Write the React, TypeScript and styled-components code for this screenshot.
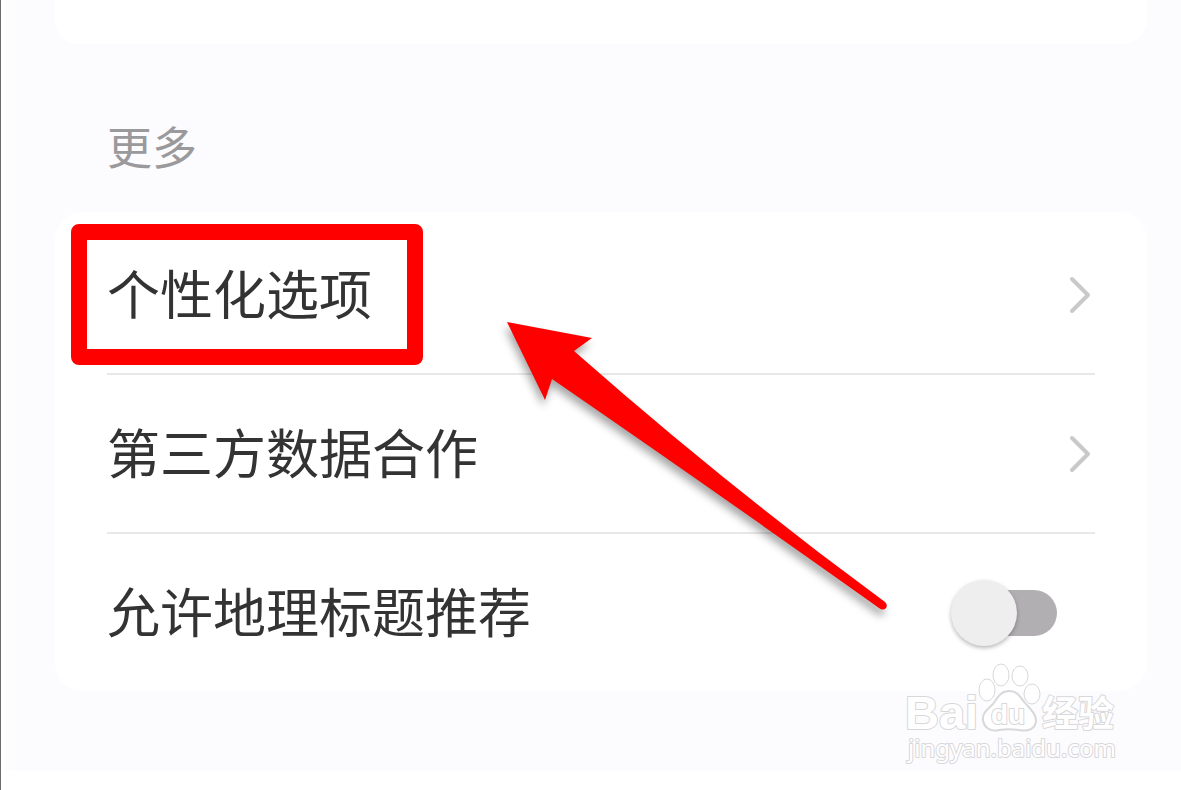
import React from 'react';
import styled, { createGlobalStyle } from 'styled-components';

const GlobalStyle = createGlobalStyle`
  * { box-sizing: border-box; }
  body {
    margin: 0;
    background: #ffffff;
    font-family: "Noto Sans CJK SC", "Noto Sans", sans-serif;
  }
`;

const Page = styled.div`
  min-height: 100vh;
  padding-left: 4px;
  border-left: 1px solid #6c6c6c;
  background: #ffffff;
`;

const Panel = styled.main`
  padding: 0 34px 80px 39px;
  border-left: 11px solid #fdfdfd;
  background: #fcfbfe;
`;

const PreviousCard = styled.div`
  height: 44px;
  border-radius: 0 0 24px 24px;
  background: #ffffff;
`;

const SectionTitle = styled.h2`
  margin: 0;
  padding: 69px 52px 33px;
  font-size: 45px;
  line-height: 66px;
  font-weight: 400;
  color: #9a999b;
`;

const Card = styled.section`
  position: relative;
  padding: 4px 52px 0;
  border-radius: 28px;
  background: #ffffff;
`;

const List = styled.ul`
  margin: 0;
  padding: 0;
  list-style: none;
`;

const Item = styled.li`
  position: relative;
  &:not(:last-child) {
    border-bottom: 2px solid #e8e8e8;
  }
`;

const LinkRow = styled.a`
  display: flex;
  align-items: center;
  justify-content: space-between;
  height: 157px;
  padding-right: 4px;
  color: #333333;
  text-decoration: none;
`;

const SwitchRow = styled.label`
  display: flex;
  align-items: center;
  justify-content: space-between;
  height: 157px;
  padding-right: 38px;
  color: #333333;
`;

const RowText = styled.span`
  padding-bottom: 6px;
  font-size: 53px;
  line-height: 76px;
`;

const Switch = styled.input`
  appearance: none;
  position: relative;
  width: 106px;
  height: 66px;
  margin: 0;
  &::before {
    content: "";
    position: absolute;
    inset: 10px 0 10px 12px;
    border-radius: 23px;
    background: #b2afb3;
  }
  &::after {
    content: "";
    position: absolute;
    top: 0;
    left: 0;
    width: 66px;
    height: 66px;
    border-radius: 50%;
    background: #eeeeee;
    box-shadow: 0 2px 4px rgba(0, 0, 0, 0.28);
  }
  &:checked::after {
    left: 40px;
  }
`;

const Highlight = styled.div`
  position: absolute;
  top: 8px;
  left: -36px;
  width: 352px;
  height: 141px;
  border: 16px solid #ff0000;
  border-radius: 8px;
  pointer-events: none;
`;

const Arrow = styled.svg`
  position: absolute;
  top: 98px;
  left: 441px;
  pointer-events: none;
  filter: drop-shadow(-2px 6px 4px rgba(0, 0, 0, 0.35));
`;

const Watermark = styled.svg`
  position: absolute;
  top: 446px;
  right: 17px;
  pointer-events: none;
  fill: #ffffff;
  stroke: #d8d7da;
  stroke-width: 2px;
  stroke-linejoin: round;
  text { paint-order: stroke; }
`;

const Chevron = () => (
  <svg width="24" height="40" viewBox="0 0 24 40" fill="none" stroke="#c9c9c9" strokeWidth="4" strokeLinecap="round" strokeLinejoin="round" aria-hidden="true">
    <path d="M5 4 L21 20 L5 36" />
  </svg>
);

export default function App() {
  return (
    <>
      <GlobalStyle />
      <Page>
        <Panel>
          <PreviousCard />
          <SectionTitle>更多</SectionTitle>
          <Card>
            <List>
              <Item>
                <LinkRow href="#personal">
                  <RowText>个性化选项</RowText>
                  <Chevron />
                </LinkRow>
                <Highlight />
              </Item>
              <Item>
                <LinkRow href="#data">
                  <RowText>第三方数据合作</RowText>
                  <Chevron />
                </LinkRow>
              </Item>
              <Item>
                <SwitchRow htmlFor="geo">
                  <RowText>允许地理标题推荐</RowText>
                  <Switch type="checkbox" role="switch" id="geo" />
                </SwitchRow>
              </Item>
            </List>
            <Arrow width="400" height="310" viewBox="496 310 400 310" aria-hidden="true">
              <path
                fill="#ff0000"
                d="M507 322 L592 338 L574 351 Q726 485 885 602 Q888 605 886 608 Q883 611 879 608 Q722 496 552 379 L545 400 Z"
              />
            </Arrow>
            <Watermark width="230" height="110" viewBox="900 658 230 110">
              <text x="905" y="729" fontFamily="Liberation Sans, sans-serif" fontWeight="700" fontSize="47">Bai</text>
              <ellipse cx="1001" cy="675" rx="8" ry="11" strokeWidth="1" />
              <ellipse cx="1020" cy="676" rx="8" ry="10" strokeWidth="1" />
              <ellipse cx="987" cy="690" rx="8" ry="11" strokeWidth="1" />
              <ellipse cx="1032" cy="694" rx="8" ry="10" strokeWidth="1" />
              <path d="M1009 691 C1000 691 997 699 993 704 C988 709 982 713 983 720 C984 728 991 732 999 730 C1006 729 1012 729 1019 730 C1028 732 1036 729 1036 720 C1036 713 1029 708 1025 703 C1020 697 1018 691 1009 691 Z" />
              <text x="991" y="724" fontFamily="Liberation Sans, sans-serif" fontWeight="700" fontSize="28">du</text>
              <text x="1042" y="727" fontFamily="Noto Sans CJK SC, sans-serif" fontWeight="700" fontSize="36">经验</text>
              <text x="908" y="757" fontFamily="Noto Sans, sans-serif" fontSize="24">jingyan.baidu.com</text>
            </Watermark>
          </Card>
        </Panel>
      </Page>
    </>
  );
}
